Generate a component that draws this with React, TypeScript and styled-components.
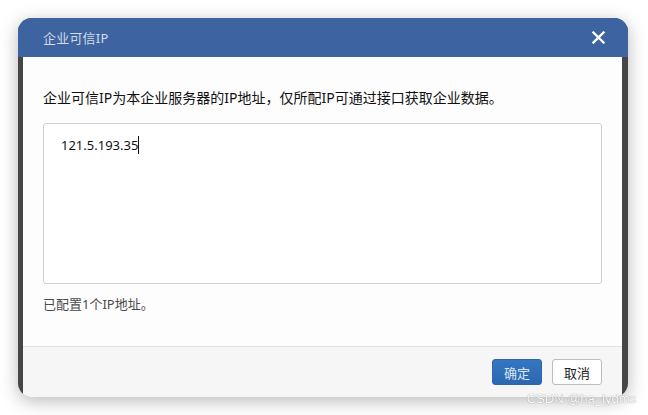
import React from 'react';

import styled, { createGlobalStyle } from 'styled-components';

const GlobalStyle = createGlobalStyle`
  html, body {
    margin: 0;
    padding: 0;
    background: #ffffff;
  }

  body {
    font-family: "Noto Sans", "Noto Sans CJK SC", sans-serif;
  }
`;

const CloseIcon = () => (
  <svg width='13' height='13' viewBox='0 0 13 13'>
    <path d='M1.5 1.5 L11.5 11.5 M11.5 1.5 L1.5 11.5' stroke='#ffffff' strokeWidth='2.3' strokeLinecap='square' />
  </svg>
);

const App = () => {
  const ipList = ['121.5.193.35'];

  return (
    <Page>
      <GlobalStyle />
      <Frame>
        <Header>
          <Title>企业可信IP</Title>
          <CloseButton aria-label='关闭'>
            <CloseIcon />
          </CloseButton>
        </Header>
        <Panel>
          <Body>
            <Intro>企业可信IP为本企业服务器的IP地址，仅所配IP可通过接口获取企业数据。</Intro>
            <IpBox>
              {ipList.join('\n')}
              <Caret />
            </IpBox>
            <Count>已配置{ipList.length}个IP地址。</Count>
          </Body>
          <Footer>
            <Button $primary>确定</Button>
            <Button>取消</Button>
          </Footer>
        </Panel>
      </Frame>
      <Watermark>CSDN @ha_lydms</Watermark>
    </Page>
  );
};

export default App;

const Page = styled.div`
  position: relative;
  width: 648px;
  height: 415px;
  padding: 18px 20px 0 18px;
  box-sizing: border-box;
  overflow: hidden;
`;

const Frame = styled.div`
  display: flex;
  flex-direction: column;
  width: 610px;
  height: 379px;
  border-radius: 14px;
  overflow: hidden;
  background: #464646;
  box-shadow: 0 4px 18px rgba(0, 0, 0, 0.28);
`;

const Header = styled.div`
  display: flex;
  align-items: center;
  justify-content: space-between;
  flex: 0 0 39px;
  padding: 0 20px 0 25px;
  background: #3d64a0;
`;

const Title = styled.span`
  font-size: 13px;
  color: #d3dcea;
  letter-spacing: 0.2px;
`;

const CloseButton = styled.button`
  display: flex;
  align-items: center;
  justify-content: center;
  width: 20px;
  height: 20px;
  padding: 0;
  border: none;
  background: transparent;
  cursor: pointer;
`;

const Panel = styled.div`
  display: flex;
  flex-direction: column;
  flex: 1;
  margin: 0 6px 0 5px;
  background: #fdfdfd;
`;

const Body = styled.div`
  display: flex;
  flex-direction: column;
  flex: 1;
  padding: 31px 20px 0 20px;
`;

const Intro = styled.p`
  margin: 0 0 15px;
  font-size: 14px;
  line-height: 20px;
  color: #111111;
`;

const IpBox = styled.div`
  display: flex;
  align-items: flex-start;
  height: 161px;
  padding: 11px 17px;
  box-sizing: border-box;
  border: 1px solid #cfcfcf;
  border-radius: 3px;
  background: #ffffff;
  font-size: 13px;
  line-height: 20px;
  color: #111111;
  white-space: pre;
`;

const Caret = styled.span`
  display: inline-block;
  width: 1px;
  height: 18px;
  margin-top: 1px;
  background: #111111;
`;

const Count = styled.p`
  margin: 11px 0 0;
  font-size: 13px;
  line-height: 18px;
  color: #4a4a4a;
`;

const Footer = styled.div`
  display: flex;
  align-items: center;
  justify-content: flex-end;
  gap: 10px;
  flex: 0 0 50px;
  padding: 0 20px;
  border-top: 1px solid #e2e2e2;
  background: #f6f6f6;
`;

const Button = styled.button<{ $primary?: boolean }>`
  width: 50px;
  height: 26px;
  padding: 0;
  border-radius: 3px;
  border: 1px solid ${(p) => (p.$primary ? '#2c66ad' : '#bdbdbd')};
  background: ${(p) => (p.$primary ? 'linear-gradient(#3576c2, #2b68b0)' : '#ffffff')};
  color: ${(p) => (p.$primary ? '#dbe6f4' : '#222222')};
  font-family: "Noto Sans", "Noto Sans CJK SC", sans-serif;
  font-size: 13px;
  cursor: pointer;
`;

const Watermark = styled.span`
  position: absolute;
  right: 12px;
  bottom: 9px;
  font-family: "Liberation Sans", "Noto Sans", sans-serif;
  font-size: 13px;
  color: #ffffff;
  text-shadow: 0 0 1px rgba(0, 0, 0, 0.5);
`;
